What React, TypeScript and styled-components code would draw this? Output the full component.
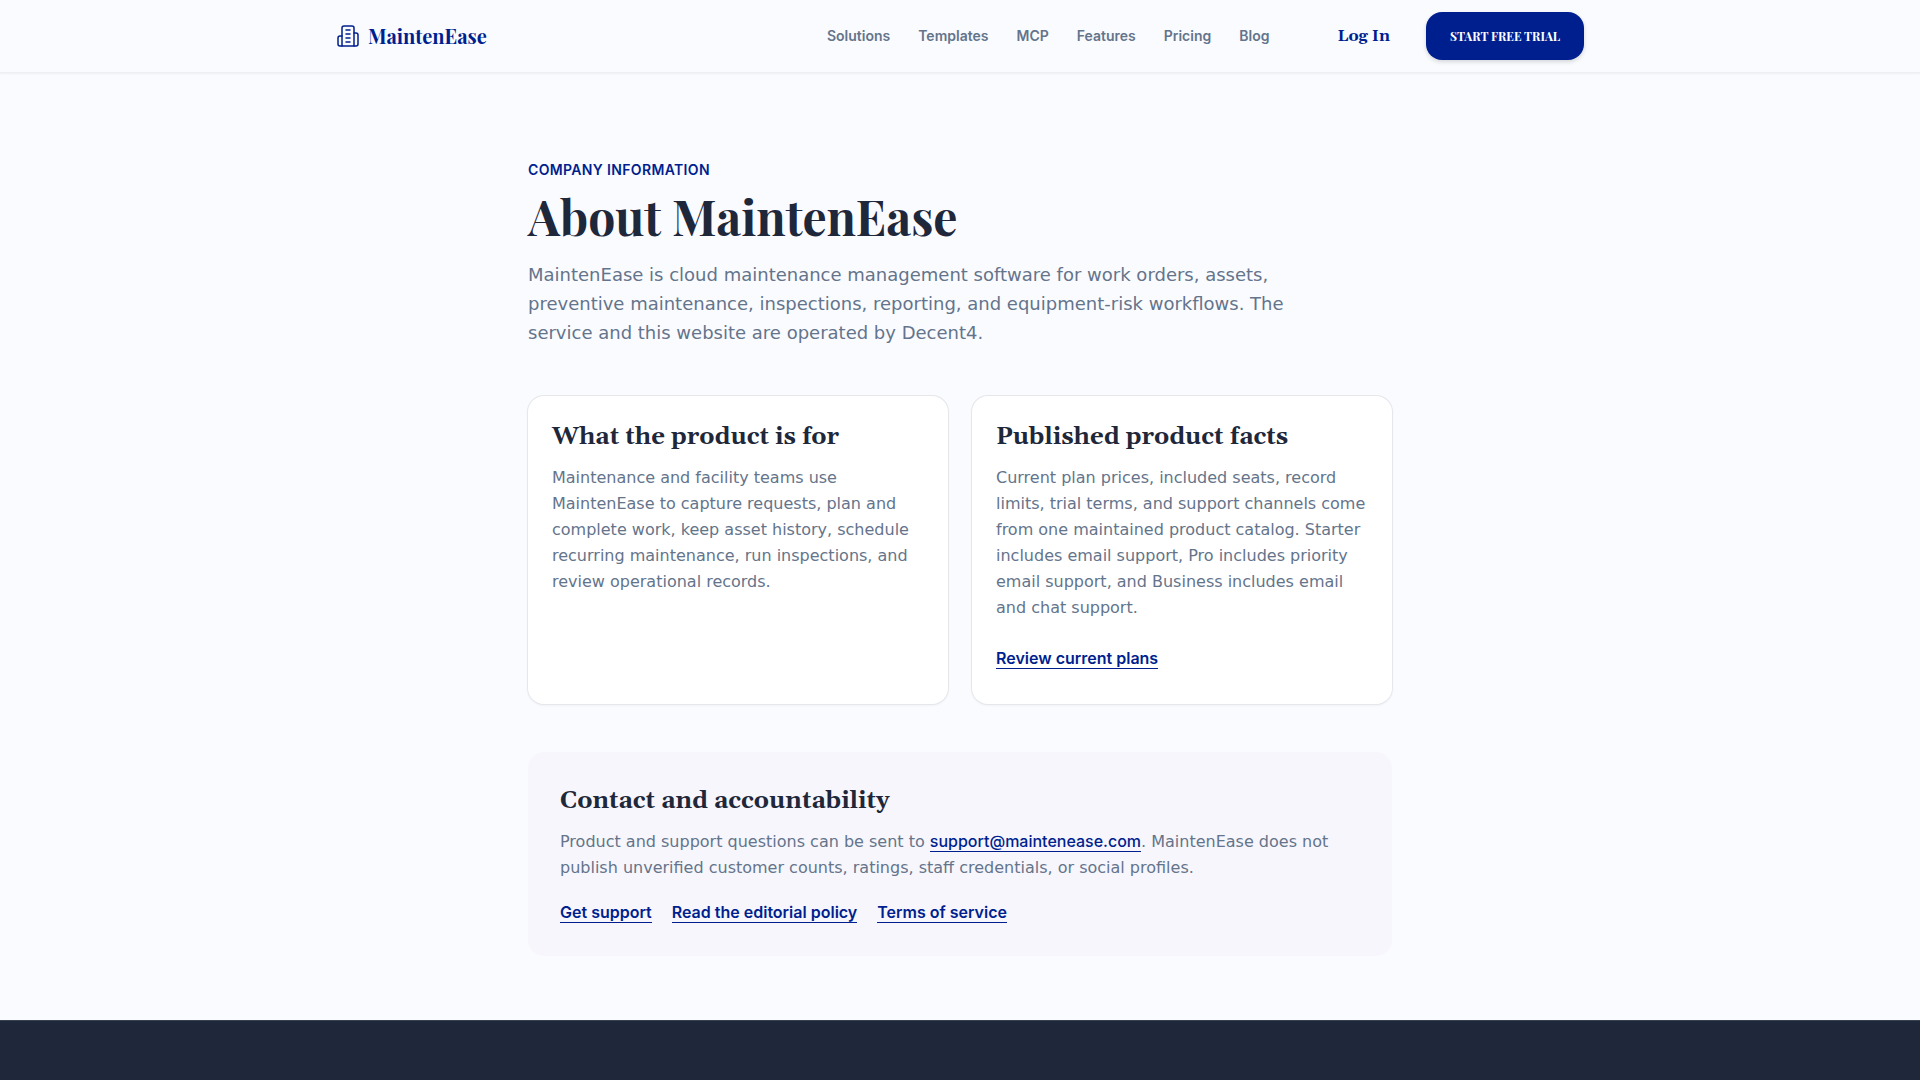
import React from "react";
import styled, { createGlobalStyle } from "styled-components";

const color = {
  page: "#fafbff",
  brand: "#001f8f",
  ink: "#1f283a",
  muted: "#64748b",
  line: "#e5e7eb",
  panel: "#f7f6fc",
};
const display = `"Playfair Display", Georgia, Gelasio, "Liberation Serif", serif`;
const heading = `Georgia, Gelasio, "Liberation Serif", serif`;
const ui = `Inter, "Liberation Sans", sans-serif`;
const prose = `Verdana, "DejaVu Sans", sans-serif`;

const GlobalStyle = createGlobalStyle`
  *, *::before, *::after { box-sizing: border-box; }
  body { margin: 0; background: ${color.page}; color: ${color.ink}; font-family: ${prose}; font-size: 16px; line-height: 26px; }
  h1, h2, p { margin: 0; }
  a { color: inherit; text-decoration: none; }
`;

const Page = styled.div`
  display: flex;
  flex-direction: column;
  min-height: 100vh;
`;
const Header = styled.header`
  border-bottom: 1px solid #eeeff4;
  box-shadow: 0 1px 2px rgba(0, 0, 0, 0.05);
`;
const HeaderInner = styled.div`
  display: flex;
  align-items: center;
  max-width: 1280px;
  margin: 0 auto;
  padding: 12px 16px;
`;
const Brand = styled.a`
  display: flex;
  align-items: center;
  gap: 8px;
  margin-right: auto;
  color: ${color.brand};
  font: 700 20px/28px ${display};
`;
const Nav = styled.nav`
  display: flex;
  gap: 28px;
  color: ${color.muted};
  font: 600 14px/20px ${ui};
`;
const Actions = styled.div`
  display: flex;
  align-items: center;
  gap: 36px;
  margin-left: 68px;
`;
const LogIn = styled.a`
  color: ${color.brand};
  font: 700 16px/24px ${heading};
`;
const TrialButton = styled.button`
  height: 48px;
  padding: 0 24px;
  border: 0;
  border-radius: 16px;
  background: ${color.brand};
  color: #fff;
  font: 700 12px/16px ${display};
  text-transform: uppercase;
  box-shadow: 0 2px 4px rgba(0, 0, 0, 0.15);
  cursor: pointer;
`;
const Main = styled.main`
  width: 100%;
  max-width: 896px;
  margin: 0 auto;
  padding: 87px 16px 64px;
`;
const Eyebrow = styled.p`
  color: ${color.brand};
  font: 600 14px/20px ${ui};
  letter-spacing: 0.35px;
  text-transform: uppercase;
`;
const Title = styled.h1`
  margin-top: 12px;
  font: 700 48px/48px ${display};
`;
const Lead = styled.p`
  max-width: 768px;
  margin-top: 20px;
  color: ${color.muted};
  font-size: 18px;
  line-height: 29px;
`;
const Cards = styled.div`
  display: grid;
  grid-template-columns: repeat(2, minmax(0, 1fr));
  gap: 24px;
  margin-top: 49px;
`;
const Card = styled.section`
  padding: 24px;
  border-radius: 16px;
  background: #fff;
  box-shadow: 0 0 0 1px ${color.line}, 0 1px 3px rgba(0, 0, 0, 0.08);
`;
const SectionTitle = styled.h2`
  font: 700 24px/34px ${heading};
`;
const Copy = styled.p`
  margin-top: 11px;
  color: ${color.muted};
`;
const TextLink = styled.a<{ $weight?: number }>`
  border-bottom: 1px solid ${color.brand};
  color: ${color.brand};
  font-family: ${ui};
  font-weight: ${(p) => p.$weight ?? 600};
  line-height: 19px;
`;
const CardAction = styled.p`
  margin-top: 24px;
  padding-bottom: 7px;
  line-height: 28px;
`;
const Contact = styled.section`
  margin-top: 48px;
  padding: 32px 32px 31px;
  border-radius: 16px;
  background: ${color.panel};
`;
const LinkRow = styled.div`
  display: flex;
  flex-wrap: wrap;
  align-items: center;
  gap: 20px;
  min-height: 24px;
  margin-top: 20px;
`;
const Footer = styled.footer`
  flex: 1;
  min-height: 60px;
  border-top: 1px solid #364153;
  background: ${color.ink};
`;

function BuildingIcon() {
  return (
    <svg width="24" height="24" viewBox="0 0 24 24" fill="none" stroke="currentColor" strokeWidth="1.5" strokeLinecap="round" strokeLinejoin="round" aria-hidden="true">
      <path d="M6 22V4a2 2 0 0 1 2-2h8a2 2 0 0 1 2 2v18Z" />
      <path d="M6 12H4a2 2 0 0 0-2 2v6a2 2 0 0 0 2 2h2" />
      <path d="M18 9h2a2 2 0 0 1 2 2v9a2 2 0 0 1-2 2h-2" />
      <path d="M10 6h4M10 10h4M10 14h4M10 18h4" />
    </svg>
  );
}

const links = ["Solutions", "Templates", "MCP", "Features", "Pricing", "Blog"];

export default function App() {
  return (
    <Page>
      <GlobalStyle />
      <Header>
        <HeaderInner>
          <Brand href="#"><BuildingIcon />MaintenEase</Brand>
          <Nav aria-label="Main">
            {links.map((label) => <a key={label} href="#">{label}</a>)}
          </Nav>
          <Actions>
            <LogIn href="#">Log In</LogIn>
            <TrialButton type="button">Start free trial</TrialButton>
          </Actions>
        </HeaderInner>
      </Header>
      <Main>
        <Eyebrow>Company information</Eyebrow>
        <Title>About MaintenEase</Title>
        <Lead>
          MaintenEase is cloud maintenance management software for work orders, assets, preventive
          maintenance, inspections, reporting, and equipment-risk workflows. The service and this
          website are operated by Decent4.
        </Lead>
        <Cards>
          <Card>
            <SectionTitle>What the product is for</SectionTitle>
            <Copy>
              Maintenance and facility teams use MaintenEase to capture requests, plan and complete
              work, keep asset history, schedule recurring maintenance, run inspections, and review
              operational records.
            </Copy>
          </Card>
          <Card>
            <SectionTitle>Published product facts</SectionTitle>
            <Copy>
              Current plan prices, included seats, record limits, trial terms, and support channels
              come from one maintained product catalog. Starter includes email support, Pro includes
              priority email support, and Business includes email and chat support.
            </Copy>
            <CardAction><TextLink href="#">Review current plans</TextLink></CardAction>
          </Card>
        </Cards>
        <Contact>
          <SectionTitle>Contact and accountability</SectionTitle>
          <Copy>
            Product and support questions can be sent to{" "}
            <TextLink $weight={500} href="mailto:support@maintenease.com">support@maintenease.com</TextLink>.
            {" "}MaintenEase does not publish unverified customer counts, ratings, staff credentials, or
            social profiles.
          </Copy>
          <LinkRow>
            <TextLink href="#">Get support</TextLink>
            <TextLink href="#">Read the editorial policy</TextLink>
            <TextLink href="#">Terms of service</TextLink>
          </LinkRow>
        </Contact>
      </Main>
      <Footer />
    </Page>
  );
}
